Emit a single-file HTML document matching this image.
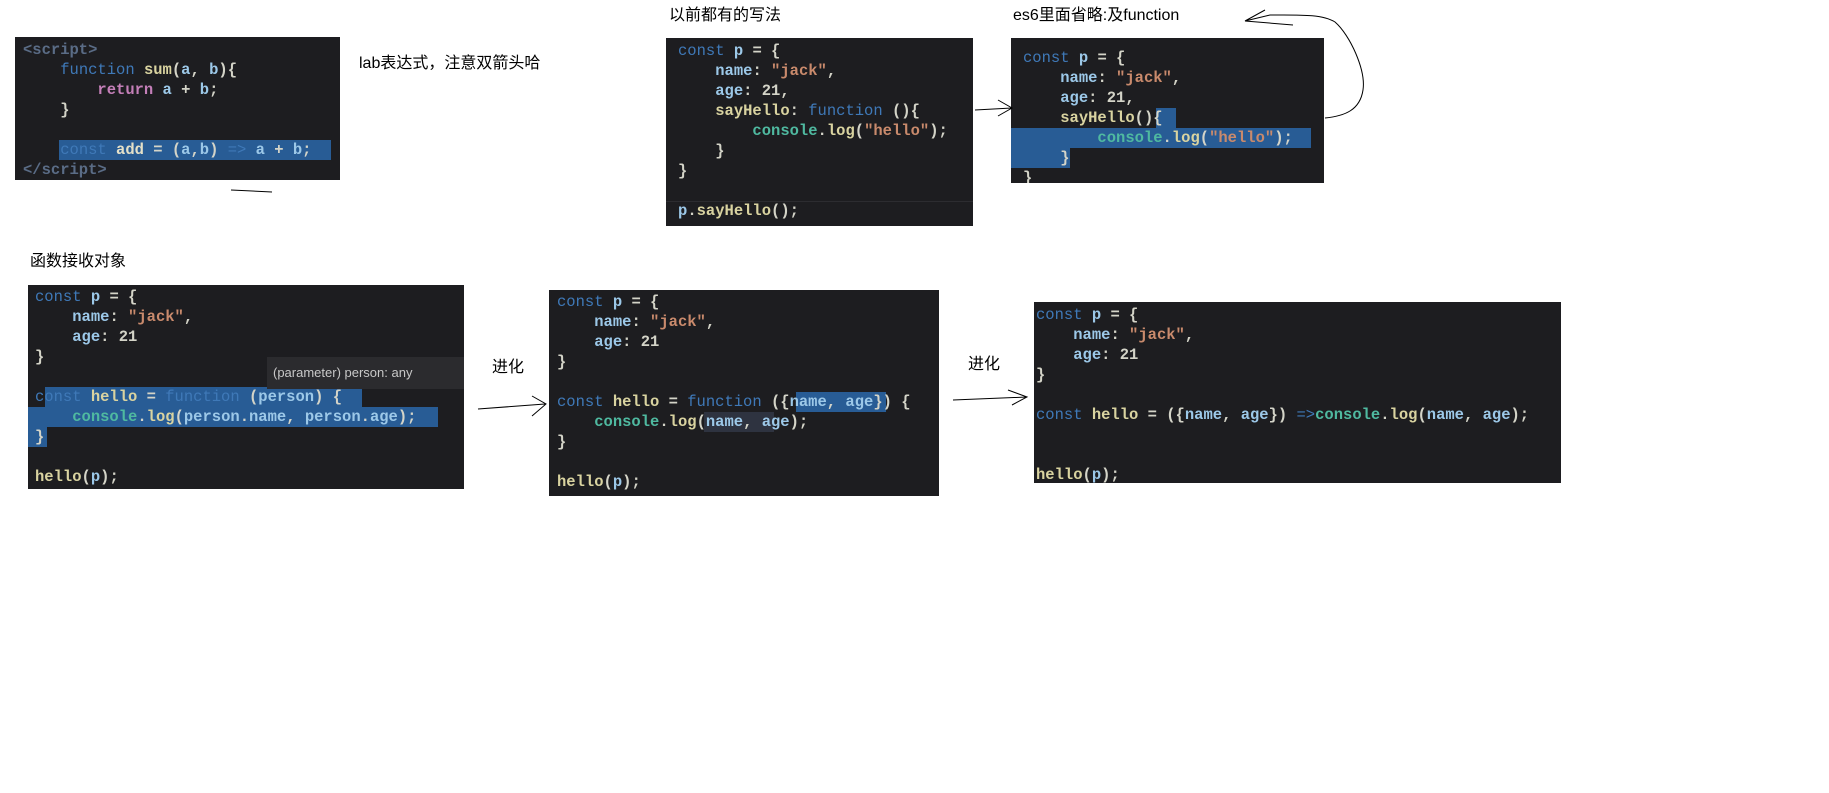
<!DOCTYPE html>
<html><head><meta charset="utf-8">
<style>
body{margin:0;width:1829px;height:793px;background:#fff;position:relative;overflow:hidden;font-family:"Liberation Sans","Noto Sans CJK SC",sans-serif}
.lbl{position:absolute;font-size:16px;color:#000;white-space:nowrap;line-height:20px}
.box{position:absolute;background:#1d1d20;overflow:hidden}
.ln{position:absolute;left:0;height:20px;line-height:20px;font-family:"Liberation Mono",monospace;font-size:15.5px;font-weight:bold;white-space:pre;color:#d4d4c8}
.sel{position:absolute;background:#285c95;height:20px}
.k{color:#3f79b8;font-weight:normal}
.f{color:#d9d3a0}
.s{color:#c98a6c}
.p{color:#9cc8e8}
.c{color:#4fb9a0}
.r{color:#c47fb8}
.g{color:#5a6c86}
.w{color:#e4e0c8}
.tip{position:absolute;background:#2b2b2e;color:#c8c8c8;font-size:13px;line-height:32px;padding:0 6px;white-space:nowrap}
</style></head><body>

<div class="lbl" style="left:359px;top:54px">lab表达式，注意双箭头哈</div>
<div class="lbl" style="left:669px;top:6px">以前都有的写法</div>
<div class="lbl" style="left:1013px;top:6px">es6里面省略:及function</div>
<div class="lbl" style="left:30px;top:252px">函数接收对象</div>
<div class="lbl" style="left:492px;top:358px">进化</div>
<div class="lbl" style="left:968px;top:355px">进化</div>

<!-- box1 -->
<div class="box" style="left:15px;top:37px;width:325px;height:143px">
<div class="sel" style="left:44px;top:103px;width:272px"></div>
<div class="ln" style="left:8px;top:3px"><span class="g">&lt;script&gt;</span></div>
<div class="ln" style="left:8px;top:23px">    <span class="k">function</span> <span class="f">sum</span>(<span class="p">a</span>, <span class="p">b</span>){</div>
<div class="ln" style="left:8px;top:43px">        <span class="r">return</span> <span class="p">a</span> + <span class="p">b</span>;</div>
<div class="ln" style="left:8px;top:63px">    }</div>
<div class="ln" style="left:8px;top:103px">    <span class="k">const</span> <span class="w">add</span> = (<span class="p">a</span>,<span class="p">b</span>) <span class="k">=&gt;</span> <span class="p">a</span> + <span class="p">b</span>;</div>
<div class="ln" style="left:8px;top:123px"><span class="g">&lt;/script&gt;</span></div>
</div>

<!-- box2 -->
<div class="box" style="left:666px;top:38px;width:307px;height:188px">
<div style="position:absolute;left:0;top:163px;width:307px;height:1px;background:#2c2c30"></div>
<div class="ln" style="left:12px;top:3px"><span class="k">const</span> <span class="p">p</span> = {</div>
<div class="ln" style="left:12px;top:23px">    <span class="p">name</span>: <span class="s">"jack"</span>,</div>
<div class="ln" style="left:12px;top:43px">    <span class="p">age</span>: 21,</div>
<div class="ln" style="left:12px;top:63px">    <span class="f">sayHello</span>: <span class="k">function</span> (){</div>
<div class="ln" style="left:12px;top:83px">        <span class="c">console</span>.<span class="f">log</span>(<span class="s">"hello"</span>);</div>
<div class="ln" style="left:12px;top:103px">    }</div>
<div class="ln" style="left:12px;top:123px">}</div>
<div class="ln" style="left:12px;top:163px"><span class="p">p</span>.<span class="f">sayHello</span>();</div>
</div>

<!-- box3 -->
<div class="box" style="left:1011px;top:38px;width:313px;height:145px">
<div class="sel" style="left:145px;top:70px;width:20px"></div>
<div class="sel" style="left:0;top:90px;width:300px"></div>
<div class="sel" style="left:0;top:110px;width:59px"></div>
<div class="ln" style="left:12px;top:10px"><span class="k">const</span> <span class="p">p</span> = {</div>
<div class="ln" style="left:12px;top:30px">    <span class="p">name</span>: <span class="s">"jack"</span>,</div>
<div class="ln" style="left:12px;top:50px">    <span class="p">age</span>: 21,</div>
<div class="ln" style="left:12px;top:70px">    <span class="f">sayHello</span>(){</div>
<div class="ln" style="left:12px;top:90px">        <span class="c">console</span>.<span class="f">log</span>(<span class="s">"hello"</span>);</div>
<div class="ln" style="left:12px;top:110px">    }</div>
<div class="ln" style="left:12px;top:130px">}</div>
</div>

<!-- box4 -->
<div class="box" style="left:28px;top:285px;width:436px;height:204px">
<div class="sel" style="left:17px;top:102px;width:317px"></div>
<div class="sel" style="left:0;top:122px;width:410px"></div>
<div class="sel" style="left:0;top:142px;width:19px"></div>
<div class="ln" style="left:7px;top:2px"><span class="k">const</span> <span class="p">p</span> = {</div>
<div class="ln" style="left:7px;top:22px">    <span class="p">name</span>: <span class="s">"jack"</span>,</div>
<div class="ln" style="left:7px;top:42px">    <span class="p">age</span>: 21</div>
<div class="ln" style="left:7px;top:62px">}</div>
<div class="ln" style="left:7px;top:102px"><span class="k">const</span> <span class="f">hello</span> = <span class="k">function</span> (<span class="p">person</span>) {</div>
<div class="ln" style="left:7px;top:122px">    <span class="c">console</span>.<span class="f">log</span>(<span class="p">person</span>.<span class="p">name</span>, <span class="p">person</span>.<span class="p">age</span>);</div>
<div class="ln" style="left:7px;top:142px">}</div>
<div class="ln" style="left:7px;top:182px"><span class="f">hello</span>(<span class="p">p</span>);</div>
<div class="tip" style="left:239px;top:72px;width:185px">(parameter) person: any</div>
</div>

<!-- box5 -->
<div class="box" style="left:549px;top:290px;width:390px;height:206px">
<div class="sel" style="left:247px;top:102px;width:90px"></div>
<div style="position:absolute;left:155px;top:122px;width:70px;height:20px;background:#2e3340"></div>
<div class="ln" style="left:8px;top:2px"><span class="k">const</span> <span class="p">p</span> = {</div>
<div class="ln" style="left:8px;top:22px">    <span class="p">name</span>: <span class="s">"jack"</span>,</div>
<div class="ln" style="left:8px;top:42px">    <span class="p">age</span>: 21</div>
<div class="ln" style="left:8px;top:62px">}</div>
<div class="ln" style="left:8px;top:102px"><span class="k">const</span> <span class="f">hello</span> = <span class="k">function</span> ({<span class="p">name</span>, <span class="p">age</span>}) {</div>
<div class="ln" style="left:8px;top:122px">    <span class="c">console</span>.<span class="f">log</span>(<span class="p">name</span>, <span class="p">age</span>);</div>
<div class="ln" style="left:8px;top:142px">}</div>
<div class="ln" style="left:8px;top:182px"><span class="f">hello</span>(<span class="p">p</span>);</div>
</div>

<!-- box6 -->
<div class="box" style="left:1034px;top:302px;width:527px;height:181px">
<div class="ln" style="left:2px;top:3px"><span class="k">const</span> <span class="p">p</span> = {</div>
<div class="ln" style="left:2px;top:23px">    <span class="p">name</span>: <span class="s">"jack"</span>,</div>
<div class="ln" style="left:2px;top:43px">    <span class="p">age</span>: 21</div>
<div class="ln" style="left:2px;top:63px">}</div>
<div class="ln" style="left:2px;top:103px"><span class="k">const</span> <span class="f">hello</span> = ({<span class="p">name</span>, <span class="p">age</span>}) <span class="k">=&gt;</span><span class="c">console</span>.<span class="f">log</span>(<span class="p">name</span>, <span class="p">age</span>);</div>
<div class="ln" style="left:2px;top:163px"><span class="f">hello</span>(<span class="p">p</span>);</div>
</div>

<svg width="1829" height="793" style="position:absolute;left:0;top:0" fill="none" stroke="#000" stroke-width="1">
<path d="M231 190 L272 192"/>
<path d="M975 110 L1012 108 M998 100 L1012 108 L998 116"/>
<path d="M1325 118 C1345 116 1360 110 1363 90 C1366 70 1350 35 1335 22 C1322 14 1300 15 1270 15 L1245 21 L1293 25 M1245 21 L1265 10"/>
<path d="M478 409 L545 404 M532 396 L546 404 L532 416"/>
<path d="M953 400 L1027 397 M1008 390 L1027 397 L1012 405"/>
</svg>
</body></html>
